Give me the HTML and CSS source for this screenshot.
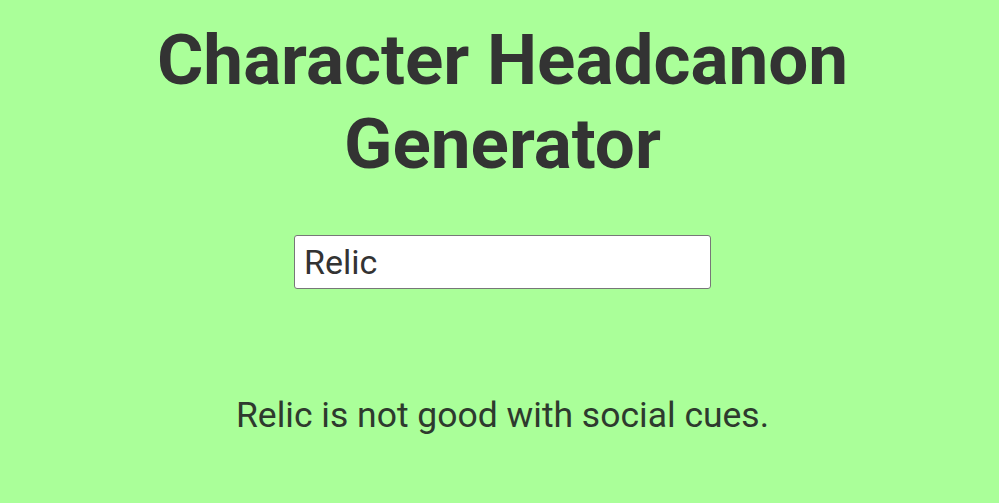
FILE: index.html
```html
<!DOCTYPE html>
<html>
<head>
    <title>Character Headcanon Generator</title>
    <link rel="stylesheet" href="styles.css">
</head>
<body>
    <div class="container">
        <h1 class="title">Character Headcanon Generator</h1>
        <input type="text" id="characterName" class="name-input" value="Relic">
        <p id="headcanon" class="headcanon">Relic is not good with social cues.</p>
    </div>
</body>
</html>
```

FILE: styles.css
```css
body {
    font-family: Roboto, "Noto Sans", sans-serif;
    background: #aaff99;
    margin: 0;
    padding: 0 0 0 6px;
    color: #333;
}

.container {
    display: flex;
    flex-direction: column;
    align-items: center;
    padding-top: 18px;
}

.title {
    width: 760px;
    margin: 0;
    text-align: center;
    font-size: 71px;
    font-weight: 700;
    line-height: 84px;
}

.name-input {
    width: 417px;
    height: 54px;
    box-sizing: border-box;
    margin-top: 49px;
    padding: 0 9px;
    border: 1px solid #777;
    border-radius: 3px;
    background: #fff;
    font-family: Roboto, sans-serif;
    font-size: 34px;
    color: #333;
    outline: none;
}

.headcanon {
    margin: 105px 0 0;
    font-size: 35.5px;
    color: #2e3a2e;
}
```
